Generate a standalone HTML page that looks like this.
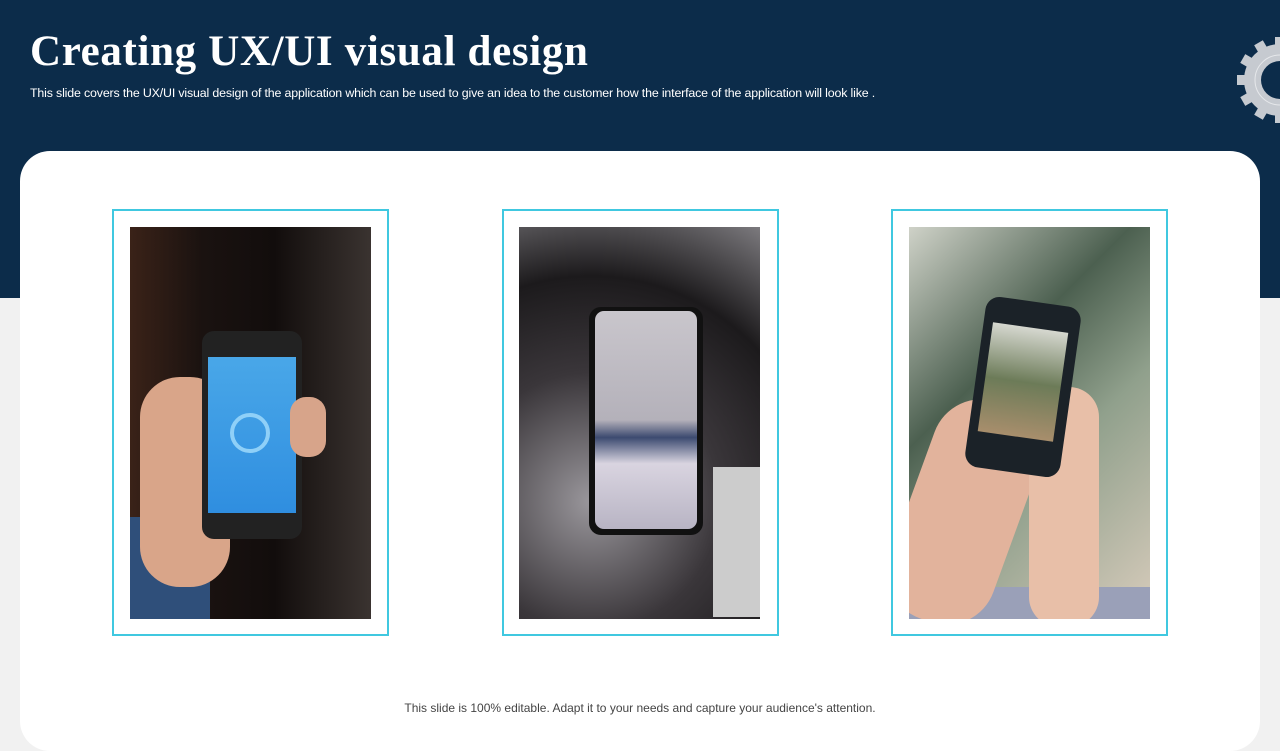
<!DOCTYPE html>
<html><head><style>
*{margin:0;padding:0;box-sizing:border-box}
body{width:1280px;height:720px;position:relative;overflow:hidden;background:#f1f1f1;font-family:"Liberation Sans",sans-serif}
.hdr{position:absolute;left:0;top:0;width:1280px;height:298px;background:#0c2c4a}
h1{position:absolute;left:30px;top:27px;font-family:"Liberation Serif",serif;font-weight:bold;font-size:43px;color:#fff;letter-spacing:0.65px}
.sub{position:absolute;left:30px;top:86px;font-size:12.4px;color:#fff;letter-spacing:-0.16px}
.card{position:absolute;left:20px;top:151px;width:1240px;height:600px;background:#fff;border-radius:30px}
.fr{position:absolute;top:209px;width:277px;height:427px;border:2px solid #40c8e0;background:#fff}
.ph{position:absolute;top:227px;width:241px;height:392px;overflow:hidden}
.foot{position:absolute;left:0;width:1280px;top:701px;text-align:center;font-size:12px;color:#444}
</style></head><body>
<div class="hdr"></div>
<h1>Creating UX/UI visual design</h1>
<div class="sub">This slide covers the UX/UI visual design of the application which can be used to give an idea to the customer how the interface of the application will look like .</div>
<svg style="position:absolute;left:1228px;top:36px" width="52" height="88" viewBox="0 0 52 88">
<g fill="#c6cad0" transform="translate(52,44)">
<circle r="36"/>
<g id="t"><rect x="-5" y="-43" width="10" height="10"/></g>
<use href="#t" transform="rotate(30)"/><use href="#t" transform="rotate(60)"/><use href="#t" transform="rotate(90)"/><use href="#t" transform="rotate(120)"/><use href="#t" transform="rotate(150)"/><use href="#t" transform="rotate(180)"/><use href="#t" transform="rotate(210)"/><use href="#t" transform="rotate(240)"/><use href="#t" transform="rotate(270)"/><use href="#t" transform="rotate(300)"/><use href="#t" transform="rotate(330)"/>
</g>
<circle cx="52" cy="44" r="25" fill="none" stroke="#e6e8eb" stroke-width="1"/>
<circle cx="52" cy="44" r="19" fill="#0c2c4a"/>
</svg>
<div class="card"></div>
<div class="fr" style="left:112px"></div>
<div class="fr" style="left:502px"></div>
<div class="fr" style="left:891px"></div>
<div class="ph" style="left:130px;background:linear-gradient(90deg,#3a2218 0%,#1a1210 30%,#120d0c 60%,#3a3330 100%)">
<div style="position:absolute;left:0;top:290px;width:80px;height:110px;background:#2f4f7a"></div>
<div style="position:absolute;left:10px;top:150px;width:90px;height:210px;background:#d9a589;border-radius:40px"></div>
<div style="position:absolute;left:72px;top:104px;width:100px;height:208px;background:#222;border-radius:12px"></div>
<div style="position:absolute;left:78px;top:130px;width:88px;height:156px;background:linear-gradient(#49a7e8,#2f8ee0)"></div>
<div style="position:absolute;left:100px;top:186px;width:40px;height:40px;border-radius:50%;border:4px solid #8fd0f8"></div>
<div style="position:absolute;left:160px;top:170px;width:36px;height:60px;background:#d7a48a;border-radius:16px"></div>
</div>
<div class="ph" style="left:519px;background:radial-gradient(circle at 30% 70%,#9a979c,#3a363a 40%,#1c1a1c 70%,#7c7a7e)">
<div style="position:absolute;left:70px;top:80px;width:114px;height:228px;background:#111;border-radius:12px"></div>
<div style="position:absolute;left:76px;top:84px;width:102px;height:218px;background:linear-gradient(#c9c6cc 0%,#b4b1ba 50%,#3c4a70 58%,#d9d4e0 70%,#b8b4c4 100%);border-radius:9px"></div>
<div style="position:absolute;left:194px;top:240px;width:48px;height:150px;background:#ccc"></div>
</div>
<div class="ph" style="left:909px;background:linear-gradient(135deg,#cfd2c8 0%,#4c6050 35%,#90a08c 60%,#d8ccbc 100%)">
<div style="position:absolute;left:0;top:360px;width:241px;height:32px;background:#9aa0b8"></div>
<div style="position:absolute;left:0;top:170px;width:110px;height:230px;background:#e2b39c;border-radius:50px;transform:rotate(20deg)"></div>
<div style="position:absolute;left:120px;top:160px;width:70px;height:240px;background:#e8bfa8;border-radius:30px"></div>
<div style="position:absolute;left:66px;top:74px;width:96px;height:172px;background:#1b2228;border-radius:14px;transform:rotate(8deg)"></div>
<div style="position:absolute;left:76px;top:100px;width:76px;height:110px;background:linear-gradient(#d6d8d0,#6c7b58 50%,#a88e6c);transform:rotate(8deg)"></div>
</div>
<div class="foot">This slide is 100% editable. Adapt it to your needs and capture your audience's attention.</div>
</body></html>
